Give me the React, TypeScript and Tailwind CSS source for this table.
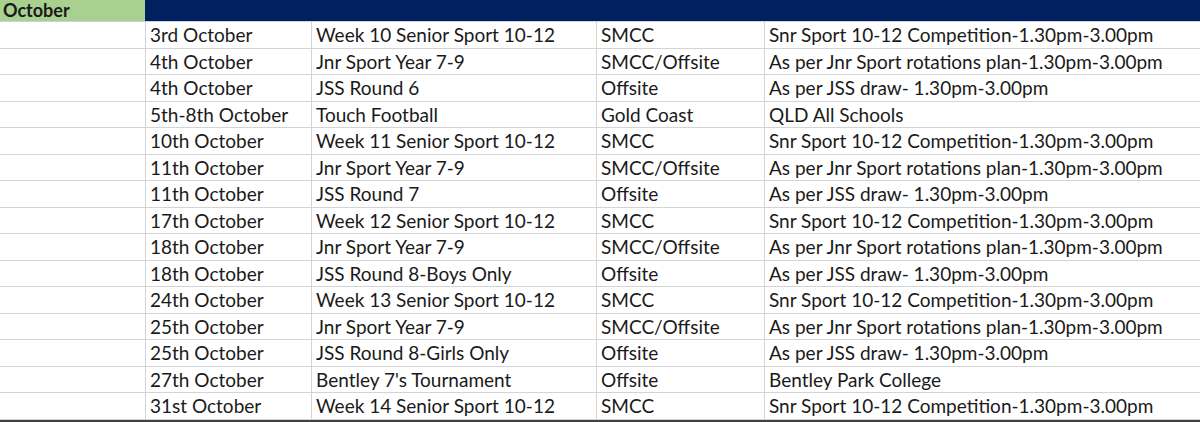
const rows = [
  ["3rd October", "Week 10 Senior Sport 10-12", "SMCC", "Snr Sport 10-12 Competition-1.30pm-3.00pm"],
  ["4th October", "Jnr Sport Year 7-9", "SMCC/Offsite", "As per Jnr Sport rotations plan-1.30pm-3.00pm"],
  ["4th October", "JSS Round 6", "Offsite", "As per JSS draw- 1.30pm-3.00pm"],
  ["5th-8th October", "Touch Football", "Gold Coast", "QLD All Schools"],
  ["10th October", "Week 11 Senior Sport 10-12", "SMCC", "Snr Sport 10-12 Competition-1.30pm-3.00pm"],
  ["11th October", "Jnr Sport Year 7-9", "SMCC/Offsite", "As per Jnr Sport rotations plan-1.30pm-3.00pm"],
  ["11th October", "JSS Round 7", "Offsite", "As per JSS draw- 1.30pm-3.00pm"],
  ["17th October", "Week 12 Senior Sport 10-12", "SMCC", "Snr Sport 10-12 Competition-1.30pm-3.00pm"],
  ["18th October", "Jnr Sport Year 7-9", "SMCC/Offsite", "As per Jnr Sport rotations plan-1.30pm-3.00pm"],
  ["18th October", "JSS Round 8-Boys Only", "Offsite", "As per JSS draw- 1.30pm-3.00pm"],
  ["24th October", "Week 13 Senior Sport 10-12", "SMCC", "Snr Sport 10-12 Competition-1.30pm-3.00pm"],
  ["25th October", "Jnr Sport Year 7-9", "SMCC/Offsite", "As per Jnr Sport rotations plan-1.30pm-3.00pm"],
  ["25th October", "JSS Round 8-Girls Only", "Offsite", "As per JSS draw- 1.30pm-3.00pm"],
  ["27th October", "Bentley 7's Tournament", "Offsite", "Bentley Park College"],
  ["31st October", "Week 14 Senior Sport 10-12", "SMCC", "Snr Sport 10-12 Competition-1.30pm-3.00pm"],
]

const cols = "grid grid-cols-[145px_166px_285px_168px_1fr]"

export default function App() {
  return (
    <div className="w-[1200px] h-[422px] overflow-hidden bg-white text-[19px] text-[#1a1a1a] font-['Lato','Liberation_Sans',sans-serif]">
      <div className={`${cols} h-[22px] border-b border-[#c8d2e0]`}>
        <div className="bg-[#a9d08e] pl-[3px] text-[18px] font-bold leading-[21px]">October</div>
        <div className="col-span-4 bg-[#002060]" />
      </div>
      {rows.map((r, i) => (
        <div key={i} className={`${cols} h-[26.5px] border-b border-[#d4d4d4]`}>
          <div />
          {r.map((c, j) => (
            <div key={j} className="border-l border-[#d4d4d4] pl-[4px] leading-[25px] whitespace-nowrap">
              {c}
            </div>
          ))}
        </div>
      ))}
      <div className={`${cols} h-[3px] border-t-2 border-[#404040]`}>
        <div className="bg-[#a9d08e]" />
        <div className="col-span-4" />
      </div>
    </div>
  )
}
